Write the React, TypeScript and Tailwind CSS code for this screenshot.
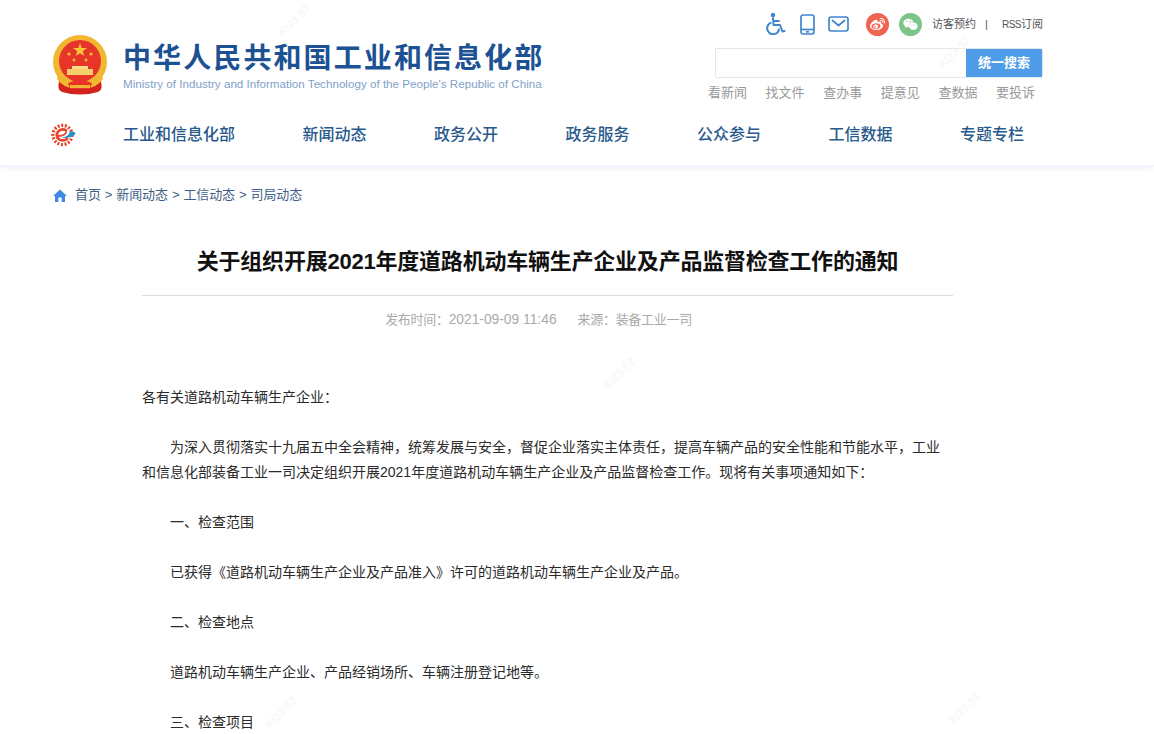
import React from "react";
import { FaWeibo, FaWeixin } from "react-icons/fa";

function Emblem() {
  return (
    <svg width="56" height="60" viewBox="0 0 56 60" className="shrink-0">
      <path d="M8 44 Q4 54 10 57 Q28 62 46 57 Q52 54 48 44 Z" fill="#d4221c" />
      <circle cx="28" cy="27" r="27" fill="#f2b632" />
      <circle cx="28" cy="26" r="21" fill="#e8352a" />
      <polygon points="28,8 29.6,13 35,13 30.7,16.2 32.3,21 28,18.2 23.7,21 25.3,16.2 21,13 26.4,13" fill="#f7c83a" />
      <circle cx="17" cy="19" r="1.6" fill="#f5c23a" />
      <circle cx="39" cy="19" r="1.6" fill="#f5c23a" />
      <circle cx="22" cy="25" r="1.4" fill="#f5c23a" />
      <circle cx="34" cy="25" r="1.4" fill="#f5c23a" />
      <rect x="20" y="31" width="16" height="3" fill="#f7d98a" />
      <rect x="15" y="34" width="26" height="6" fill="#f5cf6e" />
      <path d="M7 38 Q14 50 28 47 Q42 50 49 38 L51 44 Q42 56 28 52 Q14 56 5 44 Z" fill="#f2b632" />
      <path d="M16 48 L28 44 L40 48 L38 54 L18 54 Z" fill="#e8352a" />
      <rect x="18" y="50" width="20" height="3" fill="#f2b632" />
    </svg>
  );
}

function Wheelchair() {
  return (
    <svg width="20" height="22" viewBox="0 0 20 22" fill="none" stroke="#3f86d0" strokeWidth="2" strokeLinecap="round" strokeLinejoin="round">
      <circle cx="7" cy="2" r="1.2" fill="#3f86d0" />
      <path d="M7 5 L7.6 12 L14 12 L16.5 18.5 L18.5 18" />
      <path d="M8 8 L13 8" />
      <path d="M4.6 9.8 A6 6 0 1 0 13 16.5" />
    </svg>
  );
}

function Phone() {
  return (
    <svg width="15" height="21" viewBox="0 0 15 21" fill="none" stroke="#3f86d0" strokeWidth="1.7" strokeLinejoin="round">
      <rect x="1" y="1" width="13" height="19" rx="2.2" />
      <path d="M1 15.5 H14" />
      <path d="M6 17.8 H9" />
    </svg>
  );
}

function Mail() {
  return (
    <svg width="21" height="16" viewBox="0 0 21 16" fill="none" stroke="#3f86d0" strokeWidth="1.7" strokeLinejoin="round" strokeLinecap="round">
      <rect x="1" y="1" width="19" height="14" rx="2.2" />
      <path d="M4.5 4.5 L10.5 9.5 L16.5 4.5" />
    </svg>
  );
}

function NavLogo() {
  return (
    <svg width="25" height="24" viewBox="0 0 25 24" className="shrink-0">
      <circle cx="11.5" cy="12" r="9.5" fill="none" stroke="#e8452c" strokeWidth="3.4" strokeDasharray="2 1.6" />
      <circle cx="11.5" cy="12" r="7.8" fill="#fff" />
      <path d="M15 7.2 C11 5 6 7.5 5.8 12 C5.6 16.5 11 19 16 16.2" fill="none" stroke="#e8452c" strokeWidth="2.6" strokeLinecap="round" />
      <path d="M7.5 13 C12 13 15.5 11 15 8.8" fill="none" stroke="#e8452c" strokeWidth="1.8" strokeLinecap="round" />
      <path d="M10 14.8 C15 14.5 18.5 12 19 8 C22.5 8.5 24.5 9.5 24.5 10.5 C23 13.5 17 16 10 14.8 Z" fill="#2a8fc9" />
    </svg>
  );
}

function HomeIcon() {
  return (
    <svg width="14" height="13" viewBox="0 0 14 13" fill="#3f8ae0">
      <path d="M7 0.5 L14 7 L12 7 L12 13 L8.6 13 L8.6 8.6 L5.4 8.6 L5.4 13 L2 13 L2 7 L0 7 Z" />
    </svg>
  );
}

const nav = ["工业和信息化部", "新闻动态", "政务公开", "政务服务", "公众参与", "工信数据", "专题专栏"];
const quick = ["看新闻", "找文件", "查办事", "提意见", "查数据", "要投诉"];
const marks: string[] = [
  "left-[275px] top-[12px]",
  "left-[935px] top-[44px]",
  "left-[600px] top-[365px]",
  "left-[262px] top-[704px]",
  "left-[945px] top-[700px]",
];

export default function App() {
  return (
    <div className="relative h-[734px] w-full overflow-hidden bg-white font-['Liberation_Sans','Noto_Sans_CJK_SC',sans-serif]">
      <header className="h-[166px] border-b border-[#f3f6fb] shadow-[0_2px_6px_rgba(225,234,245,0.7)]">
        <div className="ml-[52px] flex h-[110px] w-[991px] justify-between">
          <div className="mt-[35px] flex h-[60px] items-start">
            <Emblem />
            <div className="ml-[15px] mt-[8px]">
              <div className="whitespace-nowrap text-[28px] font-bold leading-[32px] tracking-[2.1px] text-[#1c5193]">中华人民共和国工业和信息化部</div>
              <div className="mt-[2px] whitespace-nowrap text-[11.65px] leading-[13px] text-[#7f9fc9]">Ministry of Industry and Information Technology of the People's Republic of China</div>
            </div>
          </div>
          <div className="flex w-[335px] flex-col items-end">
            <div className="mt-[12px] flex h-[24px] w-[277px] items-center">
              <Wheelchair />
              <div className="ml-[14px]"><Phone /></div>
              <div className="ml-[13px]"><Mail /></div>
              <div className="ml-[17px] flex h-[23px] w-[23px] items-center justify-center rounded-full bg-[#f0634f]"><FaWeibo className="text-[15px] text-white" /></div>
              <div className="ml-[10px] flex h-[23px] w-[23px] items-center justify-center rounded-full bg-[#7dc488]"><FaWeixin className="text-[15px] text-white" /></div>
              <span className="ml-[10px] whitespace-nowrap text-[11px] text-[#555]">访客预约</span>
              <span className="ml-[9px] text-[11px] text-[#555]">|</span>
              <span className="ml-auto whitespace-nowrap text-[11px] text-[#555]"><span className="text-[10px] tracking-[-0.5px]">RSS</span>订阅</span>
            </div>
            <div className="mt-[12px] flex h-[30px] w-[328px] overflow-hidden rounded-[2px] border border-[#e3e7ec]">
              <div className="flex-1 bg-white" />
              <div className="flex w-[76px] items-center justify-center bg-[#4f9de8] text-[13px] font-bold text-white">统一搜索</div>
            </div>
            <div className="mt-[5px] flex w-[335px] gap-[18.6px]">
              {quick.map((q) => (
                <span key={q} className="w-[39px] whitespace-nowrap text-[13px] leading-[20px] text-[#999]">{q}</span>
              ))}
            </div>
          </div>
        </div>
        <nav className="ml-[51px] flex h-[50px] items-center">
          <NavLogo />
          <ul className="ml-[47px] flex gap-[67.5px]">
            {nav.map((n) => (
              <li key={n} className="whitespace-nowrap text-[16px] font-medium text-[#2a5a8c]">{n}</li>
            ))}
          </ul>
        </nav>
      </header>

      <div className="ml-[53px] mt-[19px] flex h-[20px] items-center text-[13px] tracking-[-0.1px] text-[#3f5f86]">
        <HomeIcon />
        <span className="ml-[8px]">首页</span>
        <span className="mx-[4px]">&gt;</span>
        <span>新闻动态</span>
        <span className="mx-[4px]">&gt;</span>
        <span>工信动态</span>
        <span className="mx-[4px]">&gt;</span>
        <span>司局动态</span>
      </div>

      <main className="ml-[142px] w-[811px]">
        <h1 className="mt-[37px] h-[46px] text-center text-[22px] font-bold leading-[40px] tracking-[-0.22px] text-[#111]">关于组织开展2021年度道路机动车辆生产企业及产品监督检查工作的通知</h1>
        <div className="mt-[7px] border-t border-[#dcdcdc] pr-[18px] pt-[14px] text-center text-[13px] leading-[20px] tracking-[-0.3px] text-[#aaa]">
          <span>发布时间：</span>
          <span className="text-[13.8px] tracking-normal">2021-09-09 11:46</span>
          <span className="ml-[21px]">来源：装备工业一司</span>
        </div>
        <div className="mt-[55px] space-y-[25px] text-[14px] leading-[25px] text-[#2a2a2a]">
          <p>各有关道路机动车辆生产企业：</p>
          <p className="indent-[28px]">为深入贯彻落实十九届五中全会精神，统筹发展与安全，督促企业落实主体责任，提高车辆产品的安全性能和节能水平，工业和信息化部装备工业一司决定组织开展2021年度道路机动车辆生产企业及产品监督检查工作。现将有关事项通知如下：</p>
          <p className="indent-[28px]">一、检查范围</p>
          <p className="indent-[28px]">已获得《道路机动车辆生产企业及产品准入》许可的道路机动车辆生产企业及产品。</p>
          <p className="indent-[28px]">二、检查地点</p>
          <p className="indent-[28px]">道路机动车辆生产企业、产品经销场所、车辆注册登记地等。</p>
          <p className="indent-[28px]">三、检查项目</p>
        </div>
      </main>

      {marks.map((pos, i) => (
        <span key={i} className={`pointer-events-none absolute -rotate-45 whitespace-nowrap text-[11px] text-[#f5f5f5] ${pos}`}>KI23-52</span>
      ))}
    </div>
  );
}
